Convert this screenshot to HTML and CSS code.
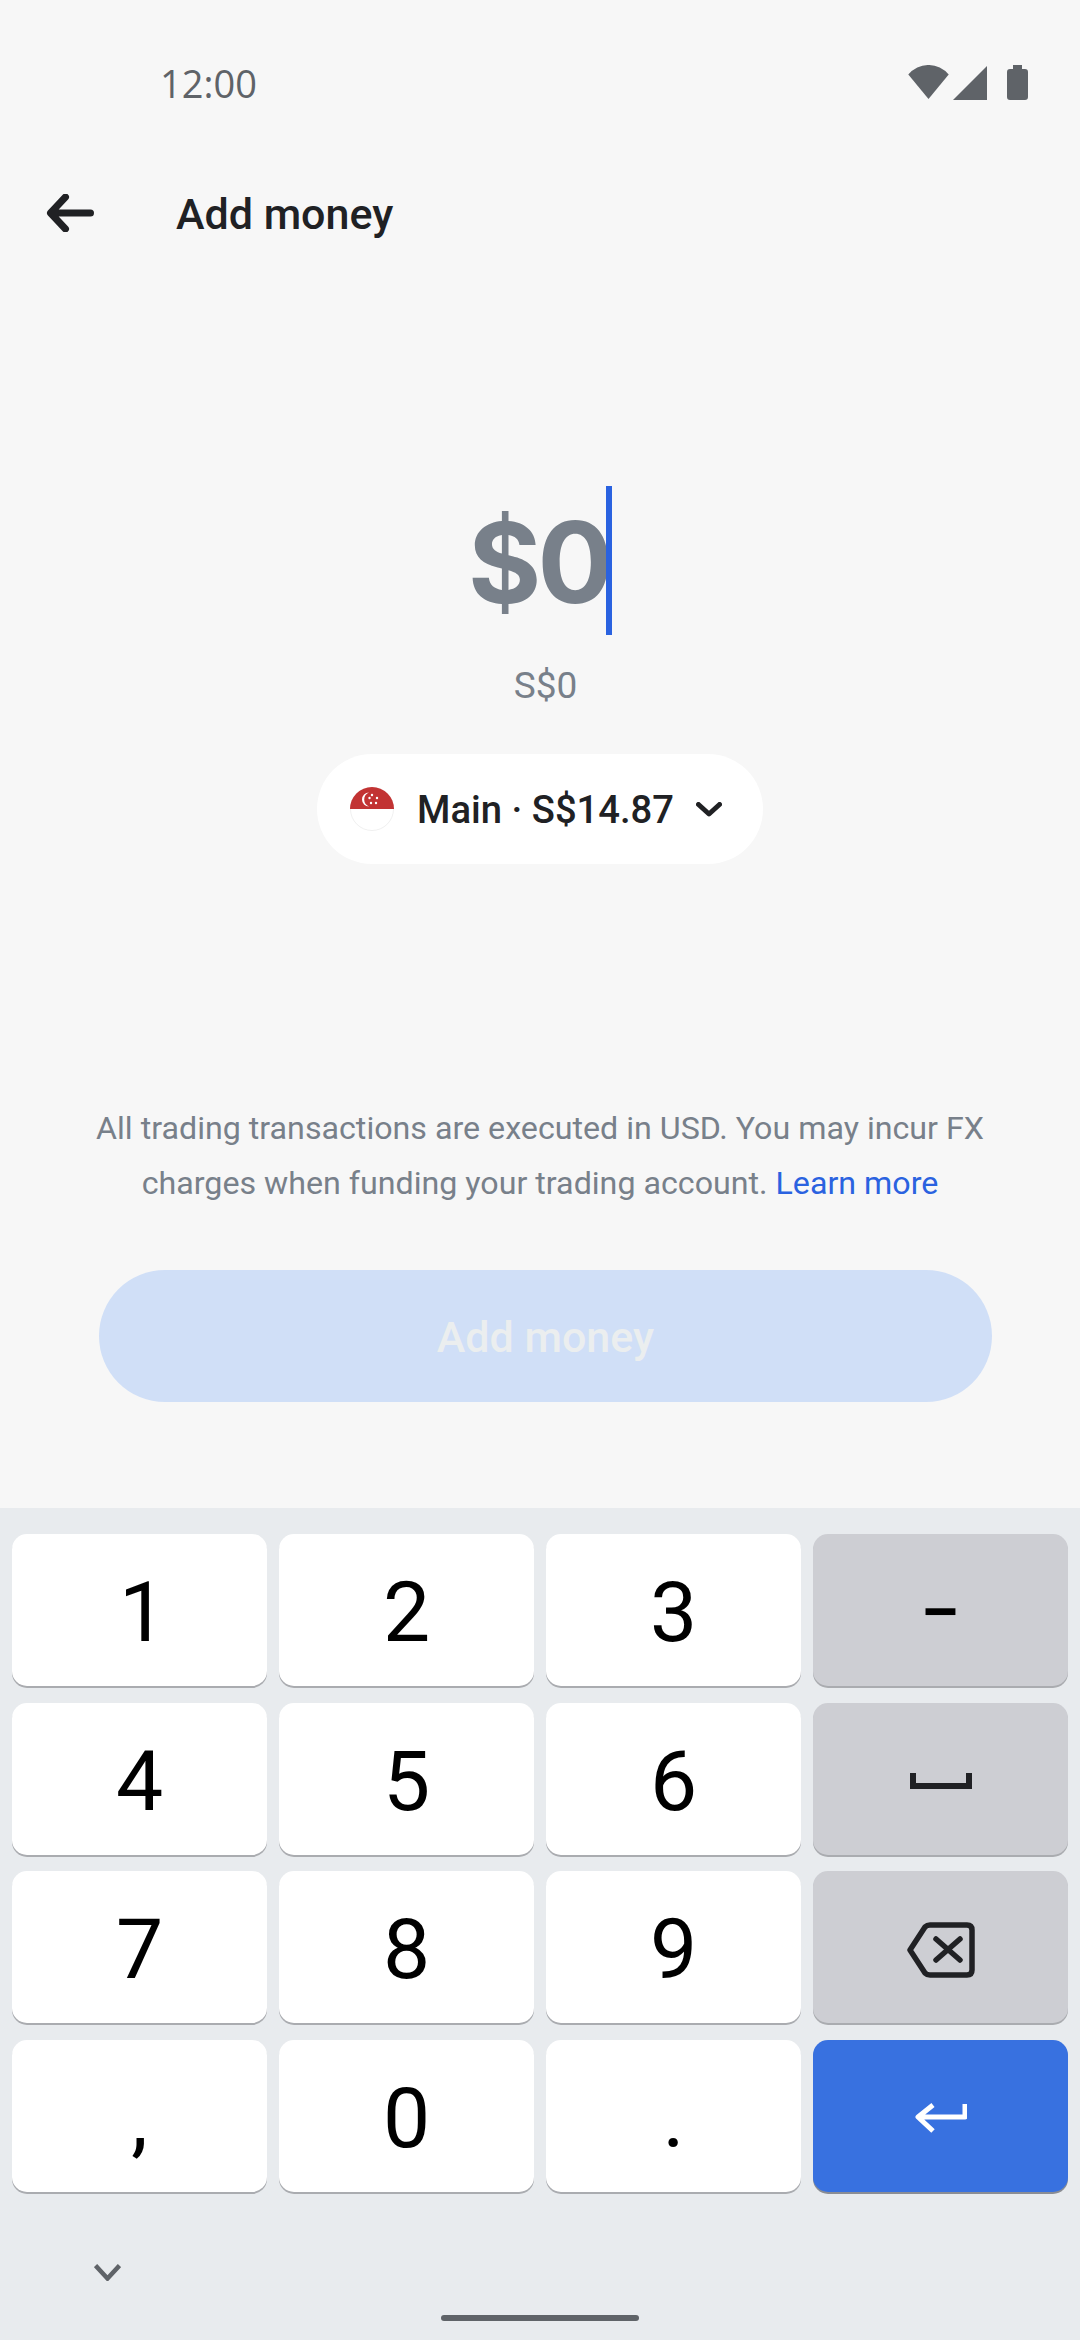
FILE: index.html
```html
<!DOCTYPE html>
<html lang="en">

<head>
    <meta charset="UTF-8">
    <meta name="viewport" content="width=device-width, initial-scale=1.0">
    <title>Add money</title>
    <link rel="stylesheet" href="styles.css">
</head>

<body>
    <div class="page">
        <!-- Status bar -->
        <div class="statusBar">
            <span class="clock">12:00</span>
            <div class="statusIcons">
                <svg class="wifiIcon" viewBox="0 0 41 35"><path d="M20.5 34 0.3 9.5A26.2 26.2 0 0 1 40.7 9.5Z" /></svg>
                <svg class="signalIcon" viewBox="0 0 34 34"><path d="M34 0V34H0Z" /></svg>
                <svg class="batteryIcon" viewBox="0 0 21 35"><path d="M6 0H15V4H18Q21 4 21 7V32Q21 35 18 35H3Q0 35 0 32V7Q0 4 3 4H6Z" /></svg>
            </div>
        </div>

        <!-- Top bar -->
        <div class="topBar">
            <svg class="backIcon" viewBox="0 0 49 38"><path d="M44.5 19H6M19.5 3 4.5 19 19.5 35" /></svg>
            <h1>Add money</h1>
        </div>

        <!-- Amount -->
        <div class="amountRow">
            <span class="amount">$0</span>
            <span class="cursor"></span>
        </div>
        <div class="converted">S$0</div>

        <div class="accountPill">
            <svg class="flag" viewBox="0 0 44 44">
                <circle cx="22" cy="22" r="21.5" fill="#fff" stroke="#f0f0f0" />
                <path d="M0 22A22 22 0 0 1 44 22Z" fill="#c23333" />
                <path d="M19 5.5A7.5 7.5 0 0 0 19 19.5 7 7 0 0 1 19 5.5Z" fill="#fff" />
                <circle cx="22" cy="8" r="1.2" fill="#fff" />
                <circle cx="27" cy="11" r="1.2" fill="#fff" />
                <circle cx="26" cy="16" r="1.2" fill="#fff" />
                <circle cx="21" cy="16" r="1.2" fill="#fff" />
                <circle cx="19.5" cy="11" r="1.2" fill="#fff" />
            </svg>
            <span class="accountText">Main · S$14.87</span>
            <svg class="pillChevron" viewBox="0 0 26 15"><path d="M2.5 2.5 13 12 23.5 2.5" /></svg>
        </div>

        <p class="notice">All trading transactions are executed in USD. You may incur FX charges when funding your trading account. <a href="#">Learn more</a></p>

        <button class="addButton" type="button">Add money</button>

        <!-- Number keyboard -->
        <div class="keyboard">
            <div class="keys">
                <div class="key keyOne">1</div>
                <div class="key">2</div>
                <div class="key">3</div>
                <div class="key keyGrey keyMinus">−</div>
                <div class="key">4</div>
                <div class="key">5</div>
                <div class="key">6</div>
                <div class="key keyGrey">
                    <svg class="spaceIcon" viewBox="0 0 62 16"><path d="M3 0V13H59V0" /></svg>
                </div>
                <div class="key">7</div>
                <div class="key">8</div>
                <div class="key">9</div>
                <div class="key keyGrey">
                    <svg class="deleteIcon" viewBox="0 0 68 56">
                        <path d="M23 3H60Q65 3 65 8V48Q65 53 60 53H23Q20 53 18 51L3 28 18 5Q20 3 23 3Z" />
                        <path d="M29 17 53 38M53 17 29 38" />
                    </svg>
                </div>
                <div class="key">,</div>
                <div class="key">0</div>
                <div class="key">.</div>
                <div class="key keyEnter">
                    <svg class="enterIcon" viewBox="0 0 52 32"><path d="M50 2V15H5M18 3 3 15 18 29" /></svg>
                </div>
            </div>
            <svg class="hideIcon" viewBox="0 0 27 17"><path d="M1.5 1.5 13.5 14.5 25.5 1.5" /></svg>
            <div class="homeBar"></div>
        </div>
    </div>
</body>

</html>
```

FILE: styles.css
```css
* {
    box-sizing: border-box;
}

body {
    margin: 0;
    font-family: Roboto, sans-serif;
    background-color: #f7f7f7;
    color: #202124;
}

.page {
    display: flex;
    flex-direction: column;
    height: 2340px;
    overflow: hidden;
}

.statusBar {
    display: flex;
    justify-content: space-between;
    align-items: center;
    height: 35px;
    margin-top: 65px;
    padding: 0 52px 0 160px;
}

.clock {
    font-family: "Open Sans", sans-serif;
    font-size: 38px;
    color: #5f6368;
}

.statusIcons {
    display: flex;
    align-items: flex-start;
    gap: 4px;
}

.statusIcons svg {
    display: block;
    fill: #5f6368;
}

.wifiIcon {
    width: 41px;
    height: 35px;
}

.signalIcon {
    width: 34px;
    height: 34px;
    margin-top: 1px;
    margin-right: 16px;
}

.batteryIcon {
    width: 21px;
    height: 35px;
}

.topBar {
    display: flex;
    align-items: center;
    gap: 81px;
    height: 76px;
    margin-top: 75px;
    padding-left: 46px;
}

.backIcon {
    width: 49px;
    height: 38px;
    fill: none;
    stroke: #202124;
    stroke-width: 7;
    stroke-linecap: round;
    stroke-linejoin: round;
}

h1 {
    margin: 0;
    padding-top: 2px;
    font-size: 43px;
    font-weight: 500;
}

.amountRow {
    display: flex;
    justify-content: center;
    align-items: center;
    height: 149px;
    margin-top: 235px;
}

.amount {
    padding-top: 3px;
    font-family: Inter, Roboto, sans-serif;
    font-size: 112px;
    font-weight: 700;
    letter-spacing: -4px;
    color: #78808a;
}

.cursor {
    width: 6px;
    height: 149px;
    margin-left: -3px;
    background-color: #2a62e0;
}

.converted {
    margin-top: 26px;
    margin-bottom: -1px;
    padding-left: 11px;
    font-size: 37px;
    line-height: 50px;
    text-align: center;
    color: #78808a;
}

.accountPill {
    display: flex;
    align-items: center;
    align-self: center;
    width: 446px;
    height: 110px;
    margin-top: 44px;
    padding-left: 33px;
    border-radius: 55px;
    background-color: #fff;
}

.flag {
    width: 44px;
    height: 44px;
}

.accountText {
    margin-left: 23px;
    padding-top: 2px;
    font-size: 38.2px;
    font-weight: 500;
}

.pillChevron {
    width: 26px;
    height: 15px;
    margin-left: 22px;
    fill: none;
    stroke: #202124;
    stroke-width: 5;
    stroke-linecap: round;
    stroke-linejoin: round;
}

.notice {
    margin: 237px 80px 0;
    font-size: 32.2px;
    line-height: 55px;
    text-align: center;
    color: #78808a;
}

.notice a {
    color: #2a62e0;
    text-decoration: none;
}

.addButton {
    height: 132px;
    margin: 59px 88px 0 99px;
    padding-top: 3px;
    border: none;
    border-radius: 66px;
    font-family: Roboto, sans-serif;
    font-size: 43px;
    font-weight: 500;
    color: #ebeeef;
    background-color: #d0dff7;
}

.keyboard {
    margin-top: auto;
    height: 832px;
    padding-top: 26px;
    background-color: #e8ebee;
}

.keys {
    display: grid;
    grid-template-columns: repeat(4, 1fr);
    grid-auto-rows: 152px;
    column-gap: 12px;
    row-gap: 16.5px;
    padding: 0 12px;
}

.key {
    display: flex;
    justify-content: center;
    align-items: center;
    padding-top: 5px;
    border-radius: 15px;
    font-size: 84px;
    color: #000;
    background-color: #fff;
    box-shadow: 0 2px 0 #aaacb0;
}

.keyOne {
    padding-left: 6px;
}

.keyGrey {
    background-color: #cdced3;
}

.keyMinus {
    font-size: 72px;
    font-weight: 500;
}

.keyEnter {
    background-color: #3871e0;
    box-shadow: 0 2px 0 #8a8d94;
}

.spaceIcon {
    width: 62px;
    height: 16px;
    fill: none;
    stroke: #202124;
    stroke-width: 6;
}

.deleteIcon {
    width: 68px;
    height: 56px;
    fill: none;
    stroke: #202124;
    stroke-width: 5.5;
    stroke-linecap: round;
    stroke-linejoin: round;
}

.enterIcon {
    width: 52px;
    height: 32px;
    fill: none;
    stroke: #fff;
    stroke-width: 5;
    stroke-linejoin: round;
}

.hideIcon {
    display: block;
    width: 27px;
    height: 17px;
    margin: 72px 0 0 94px;
    fill: none;
    stroke: #5f6368;
    stroke-width: 4.5;
}

.homeBar {
    width: 198px;
    height: 6px;
    margin: 34px auto 0;
    border-radius: 3px;
    background-color: #5f6368;
}
```
